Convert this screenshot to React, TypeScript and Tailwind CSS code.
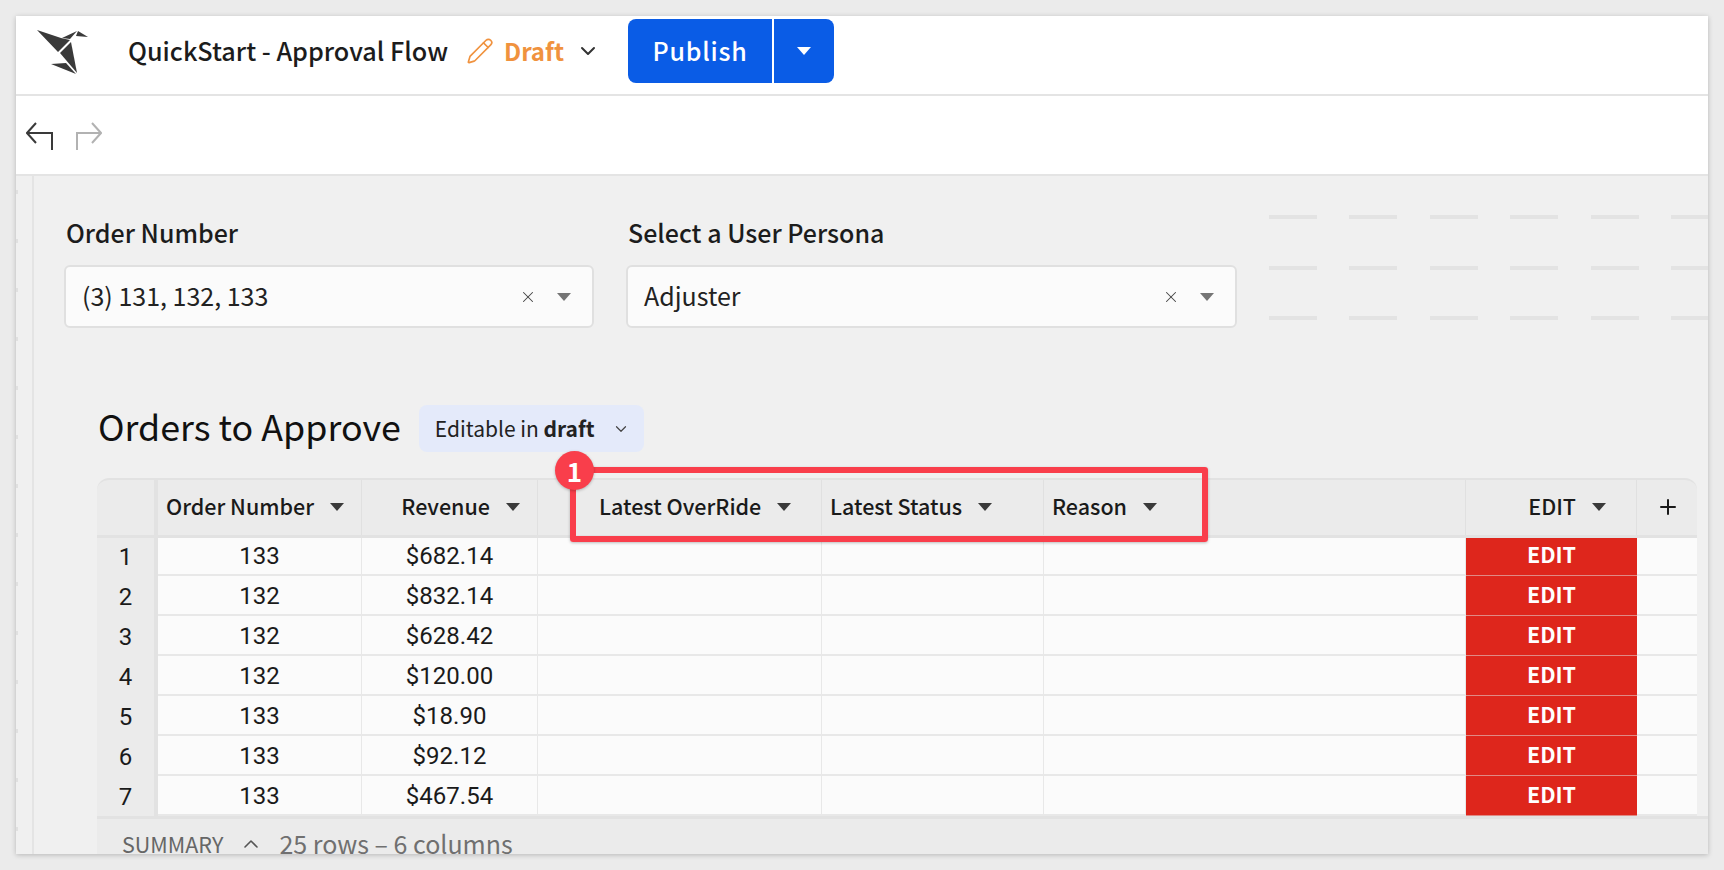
import { ChevronDown, ChevronUp, Pencil, Plus, X } from "lucide-react";

const rows = [
  { id: 1, order: "133", revenue: "$682.14" },
  { id: 2, order: "132", revenue: "$832.14" },
  { id: 3, order: "132", revenue: "$628.42" },
  { id: 4, order: "132", revenue: "$120.00" },
  { id: 5, order: "133", revenue: "$18.90" },
  { id: 6, order: "133", revenue: "$92.12" },
  { id: 7, order: "133", revenue: "$467.54" },
];

const gridCols = "grid grid-cols-[61px_204px_176px_284px_222px_422px_171px_60px]";
const sans = "font-['Noto_Sans_CJK_SC',sans-serif]";

function Caret({ className }: { className?: string }) {
  return (
    <svg width="14" height="8" viewBox="0 0 14 8" className={className}>
      <polygon points="0,0 14,0 7,8" fill="currentColor" />
    </svg>
  );
}

function Logo() {
  return (
    <svg width="60" height="60" viewBox="10 10 60 60" fill="#3a3a3a" className="mt-[10px]">
      <polygon points="17,14 41,22 50,24 38,36" />
      <polygon points="42,22 57,15 50,23" />
      <polygon points="58,15 68,21 56,20" />
      <polygon points="40,37 51,26 57,57" />
      <polygon points="31,48 46,47 56,58" />
    </svg>
  );
}

function FilterSelect({ label, value, width }: { label: string; value: string; width: string }) {
  return (
    <div className={width}>
      <div className="text-[25px] leading-[34px] font-medium text-[#1c1c1c] pl-[2px]">{label}</div>
      <div className="mt-[16px] h-[63px] flex items-center rounded-md border-2 border-[#e0e0e0] bg-[#fbfbfb] pl-[16px] pr-[21px]">
        <span className="flex-1 -mt-[2px] text-[25px] text-[#222]">{value}</span>
        <X size={18} strokeWidth={1.4} className="text-[#444]" />
        <Caret className="ml-[20px] text-[#757575]" />
      </div>
    </div>
  );
}

function HeaderCell({ label, pl, justify, pr }: { label: string; pl?: string; justify?: string; pr?: string }) {
  return (
    <div className={`flex items-center pb-[2px] border-r border-[#e0e0e0] ${pl ?? ""} ${pr ?? ""} ${justify ?? ""}`}>
      <span className="text-[21.5px] font-medium text-[#1a1a1a]">{label}</span>
      <Caret className="ml-[16px] text-[#3a3a3a]" />
    </div>
  );
}

export default function App() {
  return (
    <div className={`h-[870px] overflow-hidden bg-[#ebebeb] p-4 ${sans}`}>
      <div className="h-[838px] flex flex-col overflow-hidden bg-[#f0f0f0] shadow-[0_1px_5px_rgba(0,0,0,0.22)]">
        {/* Top bar */}
        <header className="h-[80px] shrink-0 flex items-center bg-white border-b-2 border-[#e4e4e4] pl-[14px] pb-[8px]">
          <Logo />
          <span className="ml-[38px] text-[25.2px] font-medium text-[#1c1c1c]">QuickStart - Approval Flow</span>
          <Pencil size={28} strokeWidth={1.4} className="ml-[18px] text-[#f0923e]" />
          <span className="ml-[10px] text-[24px] font-semibold text-[#f0923e]">Draft</span>
          <ChevronDown size={24} strokeWidth={2} className="ml-[12px] text-[#333]" />
          <div className="ml-[28px] h-[64px] flex text-white">
            <div className="w-[144px] flex items-center justify-center rounded-l-lg bg-[#0a5ce6] text-[25px] font-medium tracking-[0.8px]">
              Publish
            </div>
            <div className="w-[60px] ml-[2px] flex items-center justify-center rounded-r-lg bg-[#0a5ce6]">
              <Caret />
            </div>
          </div>
        </header>

        {/* Undo / redo */}
        <div className="h-[80px] shrink-0 flex items-center gap-[22px] bg-white border-b-2 border-[#e4e4e4] pl-[10px] pt-[4px]">
          <svg width="28" height="30" viewBox="0 0 28 30" fill="none" stroke="#3a3a3a" strokeWidth="2">
            <path d="M1 11H26V28M10 1L1 11L10 21" />
          </svg>
          <svg width="26" height="30" viewBox="0 0 26 30" fill="none" stroke="#b2b2b2" strokeWidth="2">
            <path d="M1 28V11H25M16 1L25 11L16 21" />
          </svg>
        </div>

        <div className="flex-1 flex min-h-0">
          {/* Left rail */}
          <div className="w-[18px] shrink-0 border-r-2 border-[#e4e4e4] flex flex-col gap-[45px] pt-[14px]">
            {Array.from({ length: 14 }).map((_, i) => (
              <div key={i} className="h-[4px] w-[2px] bg-[#e0e0e0]" />
            ))}
          </div>

          <main className="flex-1 min-w-0 flex flex-col">
            {/* Filters */}
            <div className="flex pl-[30px] pt-[39px] h-[229px] shrink-0">
              <FilterSelect label="Order Number" value="(3) 131, 132, 133" width="w-[530px]" />
              <FilterSelect label="Select a User Persona" value="Adjuster" width="w-[611px] ml-[32px]" />
              <div className="ml-[32px] flex-1 overflow-hidden flex flex-col gap-[46.5px]">
                {[0, 1, 2].map((line) => (
                  <div key={line} className="flex gap-[32.4px]">
                    {Array.from({ length: 6 }).map((_, i) => (
                      <div key={i} className="h-[4px] w-[48px] shrink-0 bg-[#e3e3e3]" />
                    ))}
                  </div>
                ))}
              </div>
            </div>

            {/* Table title */}
            <div className="ml-[64px] h-[73px] shrink-0 flex items-start">
              <h1 className="-mt-[4px] text-[35.8px] leading-[48px] font-normal text-[#111]">Orders to Approve</h1>
              <div className="ml-[18px] h-[47px] w-[225px] flex items-center rounded-lg bg-[#e4eafa] pl-[16px] text-[21px] text-[#222]">
                <span>
                  Editable in <b className="font-semibold">draft</b>
                </span>
                <ChevronDown size={18} strokeWidth={1.6} className="ml-[17px] text-[#444]" />
              </div>
            </div>

            {/* Table */}
            <div className="relative ml-[63px] w-[1600px] shrink-0">
              <div className={`${gridCols} relative z-10 -mb-[2px] h-[60px] rounded-t-xl bg-[#ebebeb] border-t-2 border-[#e2e2e2] border-b-[3px] border-b-[#e2e2e2]`}>
                <div className="border-r-4 border-[#e2e2e2]" />
                <HeaderCell label="Order Number" pl="pl-[8px]" />
                <HeaderCell label="Revenue" justify="justify-end" pr="pr-[17px]" />
                <HeaderCell label="Latest OverRide" pl="pl-[61px]" />
                <HeaderCell label="Latest Status" pl="pl-[8px]" />
                <HeaderCell label="Reason" pl="pl-[8px]" />
                <HeaderCell label="EDIT" justify="justify-end" pr="pr-[30px]" />
                <div className="flex items-center justify-center pb-[2px] pl-[2px] text-[#1a1a1a]">
                  <Plus size={24} strokeWidth={2} />
                </div>
              </div>

              {rows.map((row) => (
                <div key={row.id} className={`${gridCols} h-[40px] text-[24px] font-['Roboto',sans-serif] text-[#1a1a1a]`}>
                  <div className="flex items-center justify-center pt-[2px] bg-[#ebebeb] border-r-4 border-[#e2e2e2]">{row.id}</div>
                  <div className="flex items-center justify-center pt-[2px] bg-[#fbfbfb] border-r border-b-2 border-[#e8e8e8]">{row.order}</div>
                  <div className="flex items-center justify-center pt-[2px] bg-[#fbfbfb] border-r border-b-2 border-[#e8e8e8]">{row.revenue}</div>
                  <div className="bg-[#fbfbfb] border-r border-b-2 border-[#e8e8e8]" />
                  <div className="bg-[#fbfbfb] border-r border-b-2 border-[#e8e8e8]" />
                  <div className="bg-[#fbfbfb] border-r border-b-2 border-[#e8e8e8]" />
                  <div className={`flex items-center justify-center pb-[3px] bg-[#de261c] border-b border-[#e08a85] text-[21.5px] text-white font-semibold ${sans}`}>EDIT</div>
                  <div className="bg-[#fbfbfb] border-b-2 border-[#e8e8e8]" />
                </div>
              ))}

              {/* Callout over the header columns */}
              <div className="absolute z-20 left-[473px] -top-[11px] h-[75px] w-[638px] rounded-[3px] border-[6px] border-[#f93e4b] shadow-[0_1px_3px_rgba(0,0,0,0.25)]" />
              <div className="absolute z-20 left-[458px] -top-[27px] h-[39px] w-[39px] flex items-center justify-center rounded-full bg-[#f93e4b] text-[26px] font-bold text-white shadow-[0_1px_3px_rgba(0,0,0,0.25)]">
                1
              </div>
            </div>

            {/* Summary */}
            <div className="ml-[63px] flex-1 flex items-start border-t-[3px] border-[#e2e2e2] bg-[#ebebeb] pl-[25px] text-[#666] overflow-hidden">
              <span className="mt-[9px] text-[21.5px] leading-[32px]">SUMMARY</span>
              <ChevronUp size={24} strokeWidth={1.6} className="ml-[16px] mt-[13px] text-[#555]" />
              <span className="ml-[16px] mt-[7px] text-[25px] leading-[34px] text-[#707070]">25 rows – 6 columns</span>
            </div>
          </main>
        </div>
      </div>
    </div>
  );
}
